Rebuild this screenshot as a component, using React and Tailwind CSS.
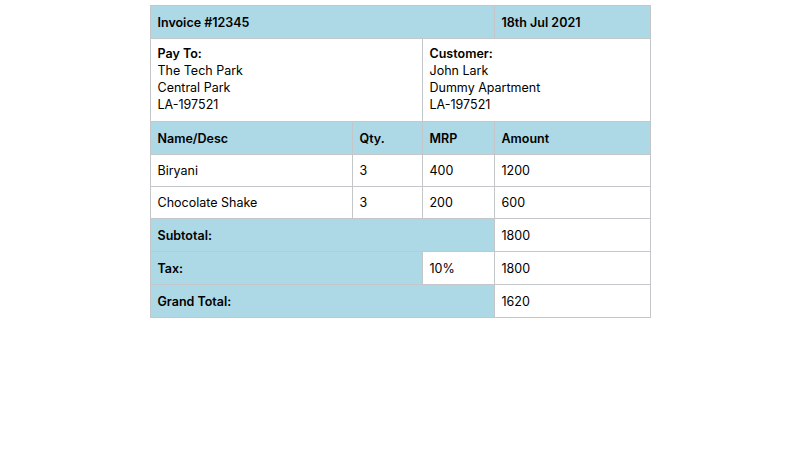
export default function App() {
  const c = "border border-[#c3c7ca] px-[7px] align-middle";
  const h = c + " bg-[#add8e6] font-semibold h-[33px]";
  const d = c + " h-[32px]";
  return (
    <div className="w-[800px] h-[450px] bg-white pt-[5px]" style={{ fontFamily: "Inter, 'Open Sans', sans-serif" }}>
      <table className="mx-auto w-[500px] border-collapse text-[12.5px] text-black leading-[17px]" style={{ tableLayout: "fixed" }}>
        <colgroup>
          <col className="w-[202px]" /><col className="w-[70px]" /><col className="w-[72px]" /><col className="w-[156px]" />
        </colgroup>
        <tbody>
          <tr><td colSpan={3} className={h}>Invoice #12345</td><td className={h}>18th Jul 2021</td></tr>
          <tr>
            <td colSpan={2} className={c + " h-[83px] py-[6px] align-top"}>
              <div className="font-semibold">Pay To:</div><div>The Tech Park</div><div>Central Park</div><div>LA-197521</div>
            </td>
            <td colSpan={2} className={c + " py-[6px] align-top"}>
              <div className="font-semibold">Customer:</div><div>John Lark</div><div>Dummy Apartment</div><div>LA-197521</div>
            </td>
          </tr>
          <tr><td className={h}>Name/Desc</td><td className={h}>Qty.</td><td className={h}>MRP</td><td className={h}>Amount</td></tr>
          <tr><td className={d}>Biryani</td><td className={d}>3</td><td className={d}>400</td><td className={d}>1200</td></tr>
          <tr><td className={d}>Chocolate Shake</td><td className={d}>3</td><td className={d}>200</td><td className={d}>600</td></tr>
          <tr><td colSpan={3} className={h}>Subtotal:</td><td className={d}>1800</td></tr>
          <tr><td colSpan={2} className={h}>Tax:</td><td className={d}>10%</td><td className={d}>1800</td></tr>
          <tr><td colSpan={3} className={h}>Grand Total:</td><td className={d}>1620</td></tr>
        </tbody>
      </table>
    </div>
  );
}
